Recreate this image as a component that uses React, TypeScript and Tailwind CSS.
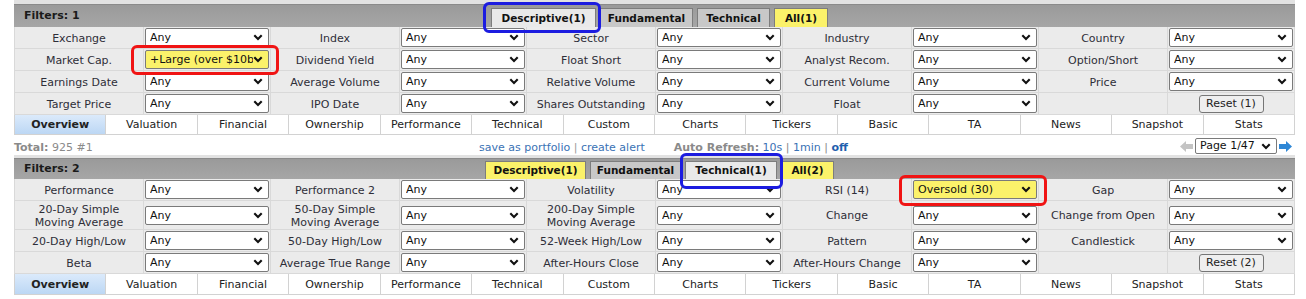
import clsx from "clsx";

// celdas de la tabla de filtros: etiqueta, select, vacío o botón de reset
type Cell =
  | { kind: "label"; text: string }
  | { kind: "select"; value: string; hl?: boolean }
  | { kind: "empty" }
  | { kind: "reset"; text: string };

const L = (text: string): Cell => ({ kind: "label", text });
const S = (value = "Any", hl = false): Cell => ({ kind: "select", value, hl });

const topRows: Cell[][] = [
  [L("Exchange"), S(), L("Index"), S(), L("Sector"), S(), L("Industry"), S(), L("Country"), S()],
  [L("Market Cap."), S("+Large (over $10bln)", true), L("Dividend Yield"), S(), L("Float Short"), S(), L("Analyst Recom."), S(), L("Option/Short"), S()],
  [L("Earnings Date"), S(), L("Average Volume"), S(), L("Relative Volume"), S(), L("Current Volume"), S(), L("Price"), S()],
  [L("Target Price"), S(), L("IPO Date"), S(), L("Shares Outstanding"), S(), L("Float"), S(), { kind: "empty" }, { kind: "reset", text: "Reset (1)" }],
];

const bottomRows: Cell[][] = [
  [L("Performance"), S(), L("Performance 2"), S(), L("Volatility"), S(), L("RSI (14)"), S("Oversold (30)", true), L("Gap"), S()],
  [L("20-Day Simple\nMoving Average"), S(), L("50-Day Simple\nMoving Average"), S(), L("200-Day Simple\nMoving Average"), S(), L("Change"), S(), L("Change from Open"), S()],
  [L("20-Day High/Low"), S(), L("50-Day High/Low"), S(), L("52-Week High/Low"), S(), L("Pattern"), S(), L("Candlestick"), S()],
  [L("Beta"), S(), L("Average True Range"), S(), L("After-Hours Close"), S(), L("After-Hours Change"), S(), { kind: "empty" }, { kind: "reset", text: "Reset (2)" }],
];

const viewTabs = ["Overview", "Valuation", "Financial", "Ownership", "Performance", "Technical", "Custom", "Charts", "Tickers", "Basic", "TA", "News", "Snapshot", "Stats"];

type FilterTab = { label: string; state: "active" | "idle" | "yellow"; w: string };

const Chevron = () => (
  <svg width="10" height="7" viewBox="0 0 10 7" className="shrink-0">
    <path d="M1.3 1.3 L5 5 L8.7 1.3" fill="none" stroke="#111" strokeWidth="2.1" />
  </svg>
);

function Select({ value, hl }: { value: string; hl?: boolean }) {
  return (
    <div
      className={clsx(
        "flex h-[19px] w-full items-center rounded-[2px] border border-[#7a7a7a] pl-[4px] pr-[5px] text-[#111]",
        hl ? "bg-[#fbf26a]" : "bg-white"
      )}
    >
      <span className="flex-1 overflow-hidden whitespace-nowrap pt-px leading-[16px]">{value}</span>
      <Chevron />
    </div>
  );
}

function FilterGrid({ rows, rowsClass }: { rows: Cell[][]; rowsClass: string }) {
  return (
    <div className={clsx("grid grid-cols-[repeat(5,128px_126px)] gap-px border-x border-b border-[#d9d9d9] bg-[#d9d9d9]", rowsClass)}>
      {rows.flat().map((cell, i) => {
        if (cell.kind === "label")
          return (
            <div key={i} className="flex items-center justify-center whitespace-pre-line bg-[#ebebeb] px-[2px] pt-px text-center leading-[13px] text-[#2e2e38]">
              {cell.text}
            </div>
          );
        if (cell.kind === "select")
          return (
            <div key={i} className="flex items-center bg-[#ebebeb] px-px">
              <Select value={cell.value} hl={cell.hl} />
            </div>
          );
        if (cell.kind === "reset")
          return (
            <div key={i} className="flex items-center justify-center bg-[#ebebeb] pt-px">
              <div className="flex h-[18px] w-[65px] items-center justify-center rounded-[3px] border border-[#767676] bg-[#efefef] pt-px text-[#222]">
                {cell.text}
              </div>
            </div>
          );
        return <div key={i} className="bg-[#ebebeb]" />;
      })}
    </div>
  );
}

function Panel({
  filters,
  tabs,
  rows,
  rowsClass,
  strip,
  header,
  tabH,
  tabRowH,
}: {
  filters: number;
  tabs: FilterTab[];
  rows: Cell[][];
  rowsClass: string;
  strip: string;
  header: string;
  tabH: string;
  tabRowH: string;
}) {
  return (
    <div>
      <div className={clsx("bg-[#e2e2e2]", strip)} />
      <div className={clsx("grid grid-cols-[1fr_auto_1fr] items-end border-t border-[#8a8a8a] bg-gradient-to-b from-[#9a9a9a] to-[#a6a6a6]", header)}>
        <div className="self-center pl-[10px] pt-px text-[11px] font-bold text-[#1a1a1a]">Filters: {filters}</div>
        <div className="ml-[10px] flex items-end gap-[4px] text-[10.5px] font-bold text-[#111]">
          {tabs.map((t) => (
            <div
              key={t.label}
              className={clsx(
                "flex items-center justify-center border border-b-0 border-[#7d7d7d] pt-px",
                tabH,
                t.w,
                t.state === "active" && "bg-[#e9e9e9]",
                t.state === "idle" && "bg-[#c8c8c8]",
                t.state === "yellow" && "bg-[#fbf26a]"
              )}
            >
              {t.label}
            </div>
          ))}
        </div>
        <div />
      </div>
      <FilterGrid rows={rows} rowsClass={rowsClass} />
      <div className="grid grid-cols-14 gap-px border-x border-b border-[#d2d2d2] bg-[#d2d2d2]">
        {viewTabs.map((t, i) => (
          <div
            key={t}
            className={clsx(
              "flex items-center justify-center pt-[2px] text-[#222]",
              tabRowH,
              i === 0 ? "bg-gradient-to-b from-[#dbeafb] to-[#bcd7f4] font-bold" : "bg-white"
            )}
          >
            {t}
          </div>
        ))}
      </div>
    </div>
  );
}

const ArrowLeft = ({ color }: { color: string }) => (
  <svg width="13" height="11" viewBox="0 0 13 11">
    <polygon points="0,5.5 6,0 6,3 13,3 13,8 6,8 6,11" fill={color} />
  </svg>
);

const ArrowRight = ({ color }: { color: string }) => (
  <svg width="13" height="11" viewBox="0 0 13 11">
    <polygon points="13,5.5 7,0 7,3 0,3 0,8 7,8 7,11" fill={color} />
  </svg>
);

function MiddleBar() {
  return (
    <div className="flex h-[20px] items-center text-[11px]">
      <div className="w-[465px] pt-[6px] text-[#8a8a8a]">
        <span className="font-bold">Total:</span> 925 #1
      </div>
      <div className="pt-[6px] text-[#3a72b5]">
        save as portfolio <span className="text-[#9a9a9a]">|</span> create alert
      </div>
      <div className="ml-[29px] pt-[6px] text-[#8a8a8a]">
        <span className="font-bold">Auto Refresh:</span> <span className="text-[#3a72b5]">10s</span> |{" "}
        <span className="text-[#3a72b5]">1min</span> | <span className="font-bold text-[#1f5fae]">off</span>
      </div>
      <div className="flex-1" />
      <div className="mr-[3px] flex items-center gap-[2px] pt-[2px]">
        <ArrowLeft color="#c4c4c4" />
        <div className="flex h-[16px] w-[82px] items-center rounded-[2px] border border-[#7a7a7a] bg-white pl-[4px] pr-[5px] text-[#111]">
          <span className="flex-1 pt-px">Page 1/47</span>
          <Chevron />
        </div>
        <ArrowRight color="#2f87d6" />
      </div>
    </div>
  );
}

export default function App() {
  return (
    <div className="relative h-[299px] w-[1306px] overflow-hidden bg-white font-['DejaVu_Sans',sans-serif] text-[11px]">
      <div className="ml-[14px] w-[1281px]">
        <Panel
          filters={1}
          strip="h-[4px]"
          header="h-[23px]"
          tabH="h-[19px]"
          tabRowH="h-[19px]"
          rowsClass="grid-rows-[21px_21px_21px_21px]"
          rows={topRows}
          tabs={[
            { label: "Descriptive(1)", state: "active", w: "w-[105px]" },
            { label: "Fundamental", state: "idle", w: "w-[93px]" },
            { label: "Technical", state: "idle", w: "w-[73px]" },
            { label: "All(1)", state: "yellow", w: "w-[54px]" },
          ]}
        />
        <MiddleBar />
        <Panel
          filters={2}
          strip="h-[3px]"
          header="h-[21px]"
          tabH="h-[18px]"
          tabRowH="h-[20px]"
          rowsClass="grid-rows-[21px_28px_21px_21px]"
          rows={bottomRows}
          tabs={[
            { label: "Descriptive(1)", state: "yellow", w: "w-[101px]" },
            { label: "Fundamental", state: "idle", w: "w-[91px]" },
            { label: "Technical(1)", state: "active", w: "w-[92px]" },
            { label: "All(2)", state: "yellow", w: "w-[53px]" },
          ]}
        />
      </div>

      {/* marcas de anotación sobre la captura */}
      <div className="pointer-events-none absolute left-[483px] top-[2px] h-[31px] w-[118px] rounded-[6px] border-[3px] border-[#1c1ce0]" />
      <div className="pointer-events-none absolute left-[131px] top-[45px] h-[30px] w-[148px] rounded-[6px] border-[3px] border-[#f01414]" />
      <div className="pointer-events-none absolute left-[680px] top-[153px] h-[36px] w-[103px] rounded-[6px] border-[3px] border-[#1c1ce0]" />
      <div className="pointer-events-none absolute left-[899px] top-[175px] h-[31px] w-[148px] rounded-[6px] border-[3px] border-[#f01414]" />
    </div>
  );
}
